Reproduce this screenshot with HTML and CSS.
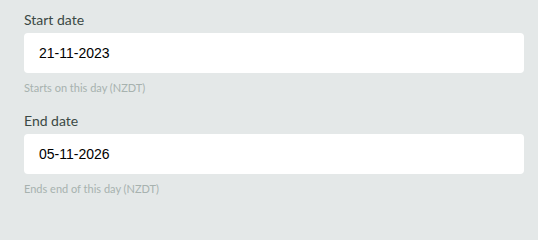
FILE: index.html
```html
<!DOCTYPE html>
<html lang="en">
<head>
<meta charset="utf-8">
<title>Dates</title>
<link rel="stylesheet" href="styles.css">
</head>
<body>
<div class="form">
  <div class="field">
    <label class="label" for="start">Start date</label>
    <input class="input" id="start" type="text" value="21-11-2023">
    <div class="help">Starts on this day (NZDT)</div>
  </div>
  <div class="field">
    <label class="label" for="end">End date</label>
    <input class="input" id="end" type="text" value="05-11-2026">
    <div class="help">Ends end of this day (NZDT)</div>
  </div>
</div>
</body>
</html>
```
FILE: styles.css
```css
html, body {
  margin: 0;
  padding: 0;
  background: #e4e8e8;
}
.form {
  padding: 10px 14px 0 24px;
  display: flex;
  flex-direction: column;
  gap: 15px;
}
.field {
  display: flex;
  flex-direction: column;
}
.label {
  font-family: Lato, "Noto Sans", sans-serif;
  font-size: 14px;
  line-height: 20px;
  color: #3b4845;
  margin-bottom: 3px;
}
.input {
  box-sizing: border-box;
  height: 40px;
  width: 500px;
  border: none;
  border-radius: 4px;
  background: #ffffff;
  padding: 0 15px;
  font-family: "Liberation Sans", Arial, sans-serif;
  font-size: 14px;
  color: #000;
  outline: none;
}
.help {
  margin-top: 7px;
  font-family: Lato, "Noto Sans", sans-serif;
  font-size: 11px;
  line-height: 16px;
  color: #a7b2af;
}
```
